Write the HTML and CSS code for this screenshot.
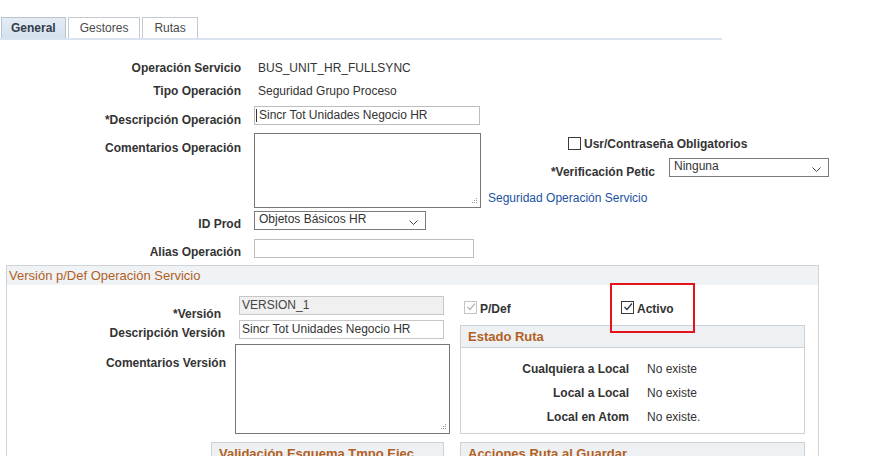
FILE: index.html
```html
<!DOCTYPE html>
<html lang="es">
<head>
<meta charset="utf-8">
<link rel="stylesheet" href="styles.css">
</head>
<body>
<div class="tabbar">
  <div class="tab tab-active">General</div>
  <div class="tab">Gestores</div>
  <div class="tab">Rutas</div>
</div>

<div class="form">
  <div class="row row-a">
    <div class="lbl">Operación Servicio</div>
    <div class="val">BUS_UNIT_HR_FULLSYNC</div>
  </div>
  <div class="row row-b">
    <div class="lbl">Tipo Operación</div>
    <div class="val">Seguridad Grupo Proceso</div>
  </div>
  <div class="row row-c row-fixed">
    <div class="lbl lbl-p6">*Descripción Operación</div>
    <div class="input input-desc"><span class="caret"></span>Sincr Tot Unidades Negocio HR</div>
  </div>
  <div class="row row-d">
    <div class="lbl lbl-p7">Comentarios Operación</div>
    <div class="textarea textarea-op"><svg class="grip" width="8" height="8" viewBox="0 0 8 8"><rect x="6" y="1" width="1" height="1"/><rect x="4" y="3" width="1" height="1"/><rect x="6" y="3" width="1" height="1"/><rect x="2" y="5" width="1" height="1"/><rect x="4" y="5" width="1" height="1"/><rect x="6" y="5" width="1" height="1"/></svg></div>
    <div class="side">
      <div class="cb-line">
        <span class="cb"></span><span class="cb-text">Usr/Contraseña Obligatorios</span>
      </div>
      <div class="verif">
        <div class="lbl-verif">*Verificación Petic</div>
        <div class="select select-verif"><span>Ninguna</span><svg width="9" height="5" viewBox="0 0 9 5"><polyline points="0.5,0.5 4.5,4.5 8.5,0.5" fill="none" stroke="#444" stroke-width="1"/></svg></div>
      </div>
      <a class="link">Seguridad Operación Servicio</a>
    </div>
  </div>
  <div class="row row-e row-fixed">
    <div class="lbl lbl-p5">ID Prod</div>
    <div class="select select-prod"><span>Objetos Básicos HR</span><svg width="9" height="5" viewBox="0 0 9 5"><polyline points="0.5,0.5 4.5,4.5 8.5,0.5" fill="none" stroke="#444" stroke-width="1"/></svg></div>
  </div>
  <div class="row row-f row-fixed">
    <div class="lbl lbl-p5">Alias Operación</div>
    <div class="input input-alias"></div>
  </div>
</div>

<div class="section">
  <div class="section-head">Versión p/Def Operación Servicio</div>
  <div class="section-body">
    <div class="col-left">
      <div class="srow srow-ver row-fixed">
        <div class="slbl slbl-ver">*Versión</div>
        <div class="input input-ver input-disabled">VERSION_1</div>
      </div>
      <div class="srow srow-desc row-fixed">
        <div class="slbl slbl-desc">Descripción Versión</div>
        <div class="input input-ver">Sincr Tot Unidades Negocio HR</div>
      </div>
      <div class="srow srow-com">
        <div class="slbl slbl-com">Comentarios Versión</div>
        <div class="textarea textarea-ver"><svg class="grip" width="8" height="8" viewBox="0 0 8 8"><rect x="6" y="1" width="1" height="1"/><rect x="4" y="3" width="1" height="1"/><rect x="6" y="3" width="1" height="1"/><rect x="2" y="5" width="1" height="1"/><rect x="4" y="5" width="1" height="1"/><rect x="6" y="5" width="1" height="1"/></svg></div>
      </div>
      <div class="box box-valid">
        <div class="box-head">Validación Esquema Tmpo Ejec</div>
      </div>
    </div>
    <div class="col-right">
      <div class="cb-row">
        <div class="cb-item cb-item-pdef">
          <span class="cb cb-disabled"><svg width="10" height="10" viewBox="0 0 10 10"><polyline points="1.5,5 4,7.5 9,1.5" fill="none" stroke="#b5b5b5" stroke-width="1.2"/></svg></span><span class="cb-text">P/Def</span>
        </div>
        <div class="cb-item cb-item-activo">
          <span class="cb"><svg width="10" height="10" viewBox="0 0 10 10"><polyline points="1.5,5 4,7.5 9,1.5" fill="none" stroke="#333" stroke-width="1.2"/></svg></span><span class="cb-text">Activo</span>
          <span class="highlight"></span>
        </div>
      </div>
      <div class="box box-estado">
        <div class="box-head">Estado Ruta</div>
        <div class="box-body">
          <div class="erow"><div class="elbl">Cualquiera a Local</div><div class="eval">No existe</div></div>
          <div class="erow"><div class="elbl">Local a Local</div><div class="eval">No existe</div></div>
          <div class="erow"><div class="elbl">Local en Atom</div><div class="eval">No existe.</div></div>
        </div>
      </div>
      <div class="box box-acc">
        <div class="box-head">Acciones Ruta al Guardar</div>
      </div>
    </div>
  </div>
</div>
</body>
</html>
```

FILE: styles.css
```css
html, body {
  margin: 0;
  padding: 0;
  background: #ffffff;
  overflow: hidden;
}
body {
  font-family: "Liberation Sans", Arial, sans-serif;
  font-size: 12px;
  color: #333333;
  width: 888px;
  height: 456px;
}

/* Tabs */
.tabbar {
  display: flex;
  gap: 2px;
  width: 721px;
  padding: 17px 0 0 1px;
  border-bottom: 2px solid #d9e4f0;
}
.tab {
  height: 20px;
  line-height: 20px;
  padding: 0 11px;
  border: 1px solid #c3cad2;
  border-bottom: none;
  color: #4a4a4a;
  font-size: 12px;
  background: #ffffff;
}
.tab-active {
  padding: 0 9px;
  font-weight: bold;
  color: #333c4a;
  background: linear-gradient(#e4ecf5, #d5e1ee);
  border-color: #b8c3cf;
}

/* Top form */
.form {
  padding-top: 20px;
}
.row {
  display: flex;
  align-items: flex-start;
}
.row-fixed {
  height: 19px;
}
.row-b, .row-c { margin-top: 7px; }
.row-d { margin-top: 8px; }
.row-e { margin-top: 3px; }
.row-f { margin-top: 9px; }
.lbl {
  flex: none;
  width: 241px;
  text-align: right;
  font-weight: bold;
  line-height: 16px;
  color: #333333;
}
.lbl-p5 { padding-top: 5px; }
.lbl-p6 { padding-top: 6px; }
.lbl-p7 { padding-top: 7px; }
.val {
  margin-left: 17px;
  line-height: 16px;
  color: #333333;
}
.input {
  box-sizing: border-box;
  height: 19px;
  border: 1px solid #bdbdbd;
  background: #ffffff;
  line-height: 15px;
  padding-left: 3px;
  color: #333333;
  white-space: nowrap;
  display: flex;
  align-items: center;
  flex: none;
}
.input-desc {
  margin-left: 13px;
  width: 226px;
  padding-left: 1px;
}
.caret {
  display: inline-block;
  width: 1px;
  height: 13px;
  background: #333;
  margin-right: 2px;
}
.input-alias {
  margin-left: 13px;
  width: 220px;
}
.textarea {
  box-sizing: border-box;
  border: 1px solid #767676;
  background: #ffffff;
  position: relative;
  flex: none;
}
.textarea-op {
  margin-left: 13px;
  width: 227px;
  height: 75px;
}
.grip {
  position: absolute;
  right: 2px;
  bottom: 2px;
  fill: #9a9a9a;
}
.side {
  margin-left: 7px;
  height: 75px;
  display: flex;
  flex-direction: column;
}
.cb-line {
  display: flex;
  align-items: center;
  margin-left: 80px;
  margin-top: 3px;
  height: 15px;
}
.cb {
  box-sizing: border-box;
  width: 13px;
  height: 13px;
  border: 1px solid #3a3a3a;
  background: #ffffff;
  display: inline-flex;
  align-items: center;
  justify-content: center;
  flex: none;
}
.cb-disabled {
  border-color: #c4c4c4;
}
.cb-text {
  margin-left: 3px;
  font-weight: bold;
  line-height: 16px;
}
.cb-item .cb-text {
  margin-top: 3px;
}
.verif {
  display: flex;
  margin-top: 7px;
  height: 19px;
}
.lbl-verif {
  width: 167px;
  text-align: right;
  font-weight: bold;
  line-height: 16px;
  padding-top: 6px;
}
.select {
  box-sizing: border-box;
  height: 19px;
  border: 1px solid #7a7a7a;
  background: #ffffff;
  display: flex;
  align-items: center;
  justify-content: space-between;
  padding: 0 7px 0 4px;
  line-height: 15px;
  flex: none;
}
.select span { margin-top: -3px; }
.select svg { margin-top: 3px; }
.select-verif {
  margin-left: 14px;
  width: 160px;
}
.select-prod {
  margin-left: 13px;
  width: 172px;
}
.link {
  margin-top: auto;
  margin-bottom: 2px;
  color: #1b52a3;
  line-height: 16px;
  cursor: pointer;
}

/* Section */
.section {
  box-sizing: border-box;
  margin: 7px 0 0 6px;
  width: 813px;
  height: 300px;
  border: 1px solid #cfd4d9;
  border-bottom: none;
}
.section-head {
  height: 19px;
  line-height: 19px;
  background: #eff3f5;
  color: #b2601f;
  font-size: 13px;
  padding-left: 2px;
}
.section-body {
  display: flex;
}
.col-left {
  width: 453px;
  flex: none;
}
.srow {
  display: flex;
  align-items: flex-start;
}
.slbl {
  box-sizing: border-box;
  width: 219px;
  flex: none;
  text-align: right;
  font-weight: bold;
  line-height: 16px;
}
.srow-ver { margin-top: 11px; }
.srow-desc, .srow-com { margin-top: 5px; }
.slbl-ver { padding-top: 10px; padding-right: 5px; }
.slbl-desc { padding-top: 5px; padding-right: 1px; }
.slbl-com { padding-top: 11px; }
.input-ver {
  margin-left: 13px;
  width: 205px;
  padding-left: 2px;
  border-color: #c6c6c6;
}
.input-disabled {
  background: #f0f0f0;
  color: #444;
}
.textarea-ver {
  margin-left: 9px;
  width: 215px;
  height: 90px;
}
.box {
  box-sizing: border-box;
  border: 1px solid #cdd1d5;
  background: #ffffff;
}
.box-head {
  height: 21px;
  line-height: 21px;
  background: #eef1f3;
  border-bottom: 1px solid #cdd1d5;
  color: #b2601f;
  font-size: 13px;
  font-weight: bold;
  padding-left: 7px;
  white-space: nowrap;
  overflow: hidden;
}
.box-valid {
  margin: 8px 0 0 204px;
  width: 233px;
  height: 40px;
}
.col-right {
  width: 345px;
  flex: none;
}
.cb-row {
  display: flex;
  align-items: center;
  margin-top: 14px;
  height: 16px;
}
.cb-item {
  display: flex;
  align-items: center;
  position: relative;
}
.cb-item-pdef {
  width: 157px;
  margin-left: 4px;
}
.highlight {
  position: absolute;
  left: -11px;
  top: -15px;
  width: 85px;
  height: 50px;
  box-sizing: border-box;
  border: 2px solid #e5141b;
}
.box-estado {
  margin-top: 10px;
  width: 345px;
}
.box-body {
  padding: 13px 0 8px 0;
}
.erow {
  display: flex;
  line-height: 16px;
}
.erow + .erow { margin-top: 8px; }
.elbl {
  width: 168px;
  text-align: right;
  font-weight: bold;
}
.eval {
  margin-left: 18px;
}
.box-acc {
  margin-top: 8px;
  width: 345px;
  height: 40px;
}
```
